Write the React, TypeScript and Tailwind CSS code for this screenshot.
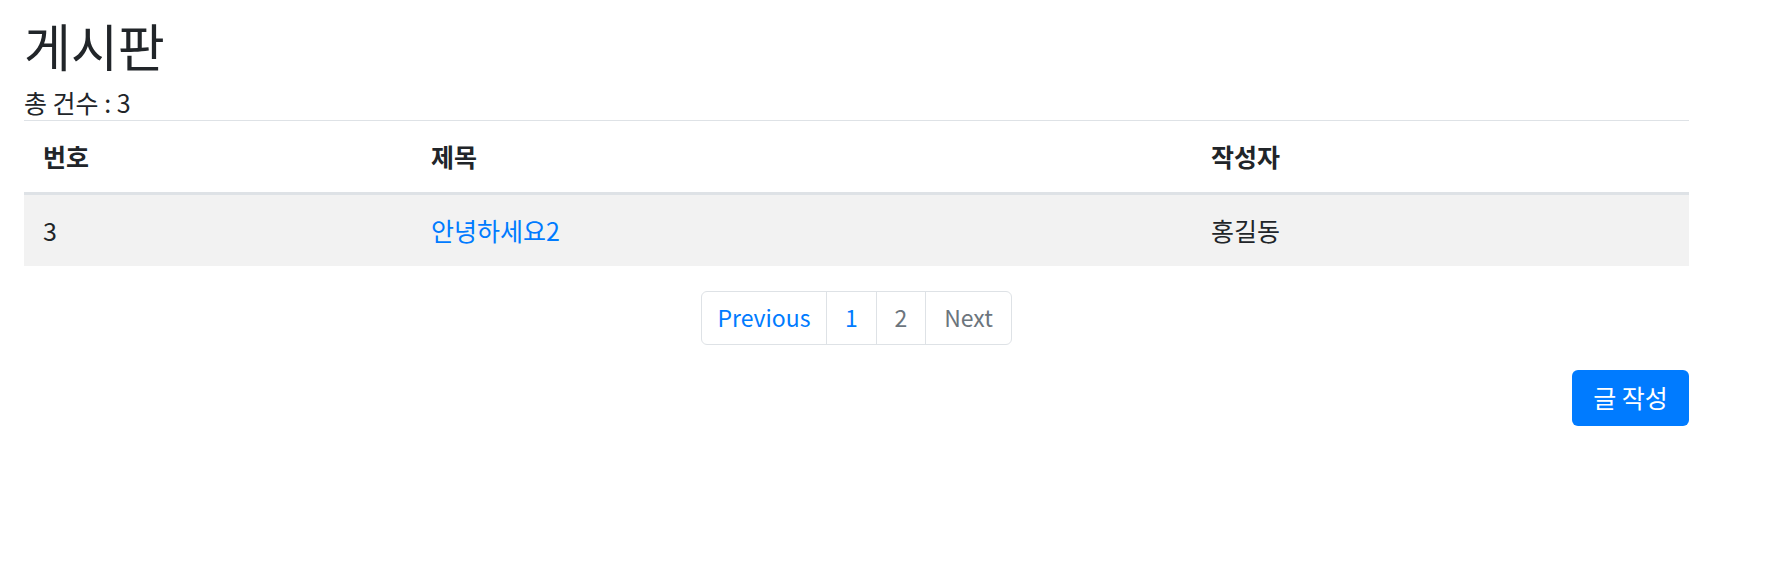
import React from "react";

type Post = {
  id: number;
  title: string;
  writer: string;
};

const totalCount = 3;
const posts: Post[] = [{ id: 3, title: "안녕하세요2", writer: "홍길동" }];

export default function App() {
  return (
    <div className="min-h-screen bg-white font-['Noto_Sans_CJK_KR','Noto_Sans',sans-serif] text-[#212529]">
      <div className="ml-[24px] w-[1665px] pt-[17px]">
        {/* title */}
        <h2 className="mb-[12px] text-[51px] font-normal leading-[56px]">게시판</h2>
        <div className="text-[25px] leading-[35px]">총 건수 : {totalCount}</div>

        {/* board table */}
        <table className="w-full border-collapse text-[25px]">
          <colgroup>
            <col className="w-[389px]" />
            <col className="w-[780px]" />
            <col />
          </colgroup>
          <thead>
            <tr className="h-[73px] border-t border-b-[3px] border-t-[#dee2e6] border-b-[#dee2e6]">
              <th className="pl-[19px] text-left font-bold">번호</th>
              <th className="pl-[18px] text-left font-bold">제목</th>
              <th className="pl-[18px] text-left font-bold">작성자</th>
            </tr>
          </thead>
          <tbody>
            {posts.map((post) => (
              <tr key={post.id} className="h-[72px] bg-[#f2f2f2]">
                <td className="pl-[19px]">{post.id}</td>
                <td className="pl-[18px]">
                  <a href="#" className="text-[#007bff]">
                    {post.title}
                  </a>
                </td>
                <td className="pl-[18px]">{post.writer}</td>
              </tr>
            ))}
          </tbody>
        </table>

        {/* pagination */}
        <div className="mt-[25px] flex justify-center">
          <ul className="flex h-[54px] overflow-hidden rounded-[6px] border border-[#dee2e6] text-[23px]">
            <li className="flex w-[124px] items-center justify-center text-[#007bff]">Previous</li>
            <li className="flex w-[50px] items-center justify-center border-l border-[#dee2e6] text-[#007bff]">1</li>
            <li className="flex w-[49px] items-center justify-center border-l border-[#dee2e6] text-[#6c757d]">2</li>
            <li className="flex w-[86px] items-center justify-center border-l border-[#dee2e6] text-[#6c757d]">Next</li>
          </ul>
        </div>

        {/* write button */}
        <div className="mt-[25px] flex justify-end">
          <button className="flex h-[56px] w-[117px] items-center justify-center rounded-[6px] bg-[#007bff] text-[25px] text-white">
            글 작성
          </button>
        </div>
      </div>
    </div>
  );
}
